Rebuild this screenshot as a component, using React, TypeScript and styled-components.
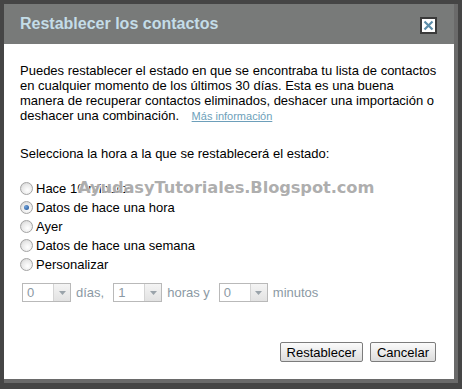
import { FC, useState } from 'react';
import styled, { createGlobalStyle } from 'styled-components';

const GlobalStyle = createGlobalStyle`
    html, body {
        margin: 0;
        padding: 0;
        background: #3e3e3e;
    }
`;

const Frame = styled.div`
    position: relative;
    width: 462px;
    height: 389px;
    box-sizing: border-box;
    padding: 4px 4px 6px 4px;
    background: #454545;
    font-family: 'Liberation Sans', Arial, sans-serif;
`;

const Dialog = styled.div`
    display: flex;
    flex-direction: column;
    height: 100%;
    box-sizing: border-box;
    border-right: 4px solid #6a6a6a;
    border-bottom: 4px solid #6a6a6a;
`;

const Header = styled.div`
    display: flex;
    align-items: center;
    justify-content: space-between;
    height: 40px;
    padding: 0 16px 0 16px;
    background: #787a79;
    flex-shrink: 0;
`;

const Title = styled.h1`
    margin: 0;
    font-size: 16px;
    font-weight: bold;
    color: #c4dde8;
`;

const CloseButton = styled.button`
    display: flex;
    align-items: center;
    justify-content: center;
    width: 17px;
    height: 17px;
    padding: 0;
    margin-right: 1px;
    margin-top: 2px;
    background: #ffffff;
    border: 2px solid #3a3a3a;
    cursor: pointer;
`;

const Body = styled.div`
    display: flex;
    flex-direction: column;
    flex: 1;
    padding: 19px 10px 17px 16px;
    background: #ffffff;
    color: #000000;
    font-size: 13px;
    line-height: 15px;
`;

const Intro = styled.p`
    margin: 0;
    white-space: nowrap;
`;

const MoreLink = styled.a`
    margin-left: 9px;
    font-size: 11px;
    color: #6d9fba;
    text-decoration: underline;
`;

const Prompt = styled.p`
    margin: 22px 0 0 0;
`;

const RadioList = styled.div`
    display: flex;
    flex-direction: column;
    margin-top: 18px;
`;

const RadioRow = styled.label`
    display: flex;
    align-items: center;
    gap: 3px;
    height: 19px;
    cursor: pointer;
`;

const RadioDot = styled.span<{ $checked: boolean }>`
    position: relative;
    width: 11px;
    height: 11px;
    border-radius: 50%;
    border: 1px solid #a4a4a4;
    background: radial-gradient(circle at 60% 65%, #ffffff 0%, #e9e9e9 55%, #c9c9c9 100%);
    flex-shrink: 0;

    &::after {
        content: '';
        display: ${(p) => (p.$checked ? 'block' : 'none')};
        position: absolute;
        left: 3px;
        top: 3px;
        width: 5px;
        height: 5px;
        border-radius: 50%;
        background: radial-gradient(circle at 35% 35%, #6fa2dc 0%, #1f4f8f 100%);
    }
`;

const CustomRow = styled.div`
    display: flex;
    align-items: center;
    gap: 5px;
    margin-top: 9px;
    margin-left: 2px;
    color: #8b99a4;
`;

const Select = styled.div`
    display: flex;
    width: 49px;
    height: 19px;
    box-sizing: border-box;
    border: 1px solid #b9b9b9;
    background: #ffffff;
`;

const SelectValue = styled.span`
    flex: 1;
    padding-left: 4px;
    line-height: 17px;
    color: #8b99a4;
`;

const SelectArrow = styled.span`
    display: flex;
    align-items: center;
    justify-content: center;
    width: 16px;
    border-left: 1px solid #d4d4d4;
    background: linear-gradient(#f4f4f4, #e2e2e2);
`;

const Unit = styled.span<{ $last?: boolean }>`
    margin-right: ${(p) => (p.$last ? 0 : 4)}px;
`;

const Actions = styled.div`
    display: flex;
    justify-content: flex-end;
    gap: 7px;
    margin-top: auto;
    margin-right: 8px;
`;

const Button = styled.button`
    height: 20px;
    padding: 0 6px;
    font-family: 'Liberation Sans', Arial, sans-serif;
    font-size: 13px;
    color: #000000;
    background: linear-gradient(#fbfbfb, #dcdcdc);
    border: 1px solid #7c7c7c;
    border-radius: 2px;
    cursor: pointer;
`;

const Watermark = styled.div`
    position: absolute;
    left: 78px;
    top: 178px;
    font-family: 'DejaVu Sans', Verdana, sans-serif;
    font-weight: bold;
    font-size: 16.3px;
    color: rgba(160, 160, 160, 0.85);
    text-shadow: 1px 1px 0 rgba(255, 255, 255, 0.9), -1px -1px 0 rgba(255, 255, 255, 0.7);
    pointer-events: none;
    letter-spacing: -0.1px;
`;

const options = [
    'Hace 10 minutos',
    'Datos de hace una hora',
    'Ayer',
    'Datos de hace una semana',
    'Personalizar',
];

const Arrow = () => (
    <svg width="7" height="4" viewBox="0 0 7 4">
        <path d="M0 0h7L3.5 4z" fill="#9aa3aa" />
    </svg>
);

const App: FC = () => {
    const [selected, setSelected] = useState(1);

    return (
        <>
            <GlobalStyle />
            <Frame>
                <Dialog>
                    <Header>
                        <Title>Restablecer los contactos</Title>
                        <CloseButton aria-label="Cerrar">
                            <svg width="11" height="11" viewBox="0 0 11 11">
                                <path d="M1.5 1.5l8 8M9.5 1.5l-8 8" stroke="#5b8ca8" strokeWidth="2.2" />
                            </svg>
                        </CloseButton>
                    </Header>
                    <Body>
                        <Intro>
                            Puedes restablecer el estado en que se encontraba tu lista de contactos
                            <br />
                            en cualquier momento de los últimos 30 días. Esta es una buena
                            <br />
                            manera de recuperar contactos eliminados, deshacer una importación o
                            <br />
                            deshacer una combinación. <MoreLink href="#">Más información</MoreLink>
                        </Intro>
                        <Prompt>Selecciona la hora a la que se restablecerá el estado:</Prompt>
                        <RadioList>
                            {options.map((label, index) => (
                                <RadioRow key={label} onClick={() => setSelected(index)}>
                                    <RadioDot $checked={selected === index} />
                                    {label}
                                </RadioRow>
                            ))}
                        </RadioList>
                        <CustomRow>
                            <Select>
                                <SelectValue>0</SelectValue>
                                <SelectArrow><Arrow /></SelectArrow>
                            </Select>
                            <Unit>días,</Unit>
                            <Select>
                                <SelectValue>1</SelectValue>
                                <SelectArrow><Arrow /></SelectArrow>
                            </Select>
                            <Unit>horas y</Unit>
                            <Select>
                                <SelectValue>0</SelectValue>
                                <SelectArrow><Arrow /></SelectArrow>
                            </Select>
                            <Unit $last>minutos</Unit>
                        </CustomRow>
                        <Actions>
                            <Button>Restablecer</Button>
                            <Button>Cancelar</Button>
                        </Actions>
                    </Body>
                </Dialog>
                <Watermark>AyudasyTutoriales.Blogspot.com</Watermark>
            </Frame>
        </>
    );
};

export default App;
